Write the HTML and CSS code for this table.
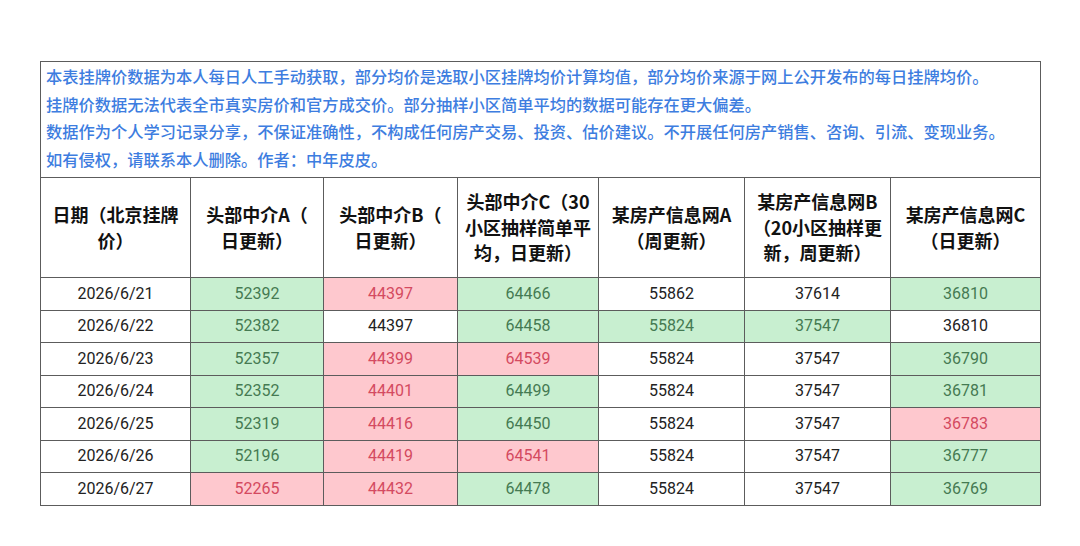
FILE: index.html
```html
<!DOCTYPE html>
<html lang="zh-CN">
<head>
<meta charset="utf-8">
<title>北京挂牌价</title>
<link rel="stylesheet" href="styles.css">
</head>
<body>
<div class="page">
<table class="sheet">
  <colgroup>
    <col class="c1"><col class="c2"><col class="c3"><col class="c4"><col class="c5"><col class="c6"><col class="c7">
  </colgroup>
  <tr class="note-row">
    <td colspan="7" class="note">本表挂牌价数据为本人每日人工手动获取，部分均价是选取小区挂牌均价计算均值，部分均价来源于网上公开发布的每日挂牌均价。<br>挂牌价数据无法代表全市真实房价和官方成交价。部分抽样小区简单平均的数据可能存在更大偏差。<br>数据作为个人学习记录分享，不保证准确性，不构成任何房产交易、投资、估价建议。不开展任何房产销售、咨询、引流、变现业务。<br>如有侵权，请联系本人删除。作者：中年皮皮。</td>
  </tr>
  <tr class="head">
    <th>日期（北京挂牌<br>价）</th>
    <th>头部中介A（<br>日更新）</th>
    <th>头部中介B（<br>日更新）</th>
    <th>头部中介C（30<br>小区抽样简单平<br>均，日更新）</th>
    <th>某房产信息网A<br>（周更新）</th>
    <th>某房产信息网B<br>（20小区抽样更<br>新，周更新）</th>
    <th>某房产信息网C<br>（日更新）</th>
  </tr>
  <tr><td>2026/6/21</td><td class="up">52392</td><td class="dn">44397</td><td class="up">64466</td><td>55862</td><td>37614</td><td class="up">36810</td></tr>
  <tr><td>2026/6/22</td><td class="up">52382</td><td>44397</td><td class="up">64458</td><td class="up">55824</td><td class="up">37547</td><td>36810</td></tr>
  <tr><td>2026/6/23</td><td class="up">52357</td><td class="dn">44399</td><td class="dn">64539</td><td>55824</td><td>37547</td><td class="up">36790</td></tr>
  <tr><td>2026/6/24</td><td class="up">52352</td><td class="dn">44401</td><td class="up">64499</td><td>55824</td><td>37547</td><td class="up">36781</td></tr>
  <tr><td>2026/6/25</td><td class="up">52319</td><td class="dn">44416</td><td class="up">64450</td><td>55824</td><td>37547</td><td class="dn">36783</td></tr>
  <tr><td>2026/6/26</td><td class="up">52196</td><td class="dn">44419</td><td class="dn">64541</td><td>55824</td><td>37547</td><td class="up">36777</td></tr>
  <tr><td>2026/6/27</td><td class="dn">52265</td><td class="dn">44432</td><td class="up">64478</td><td>55824</td><td>37547</td><td class="up">36769</td></tr>
</table>
</div>
</body>
</html>
```
FILE: styles.css
```css
html, body {
  margin: 0;
  padding: 0;
  background: #ffffff;
}
.page {
  padding: 61px 0 0 40px;
}
.sheet {
  border-collapse: collapse;
  table-layout: fixed;
  width: 1000px;
  font-family: "Roboto", "Noto Sans CJK SC", sans-serif;
  color: #222222;
}
.c1 { width: 150px; }
.c2 { width: 133px; }
.c3 { width: 134px; }
.c4 { width: 141px; }
.c5 { width: 146px; }
.c6 { width: 146px; }
.c7 { width: 150px; }
.sheet td, .sheet th {
  border: 1px solid #5c5c5c;
  padding: 0;
}
.note-row td.note {
  height: 114px;
  padding: 1px 0 0 5px;
  vertical-align: top;
  text-align: left;
  font-family: "Noto Sans CJK SC", sans-serif;
  font-size: 16.25px;
  font-weight: 500;
  line-height: 27.5px;
  color: #3d7de0;
  white-space: nowrap;
}
.head th {
  height: 99px;
  font-family: "Noto Sans CJK SC", sans-serif;
  font-size: 18px;
  font-weight: 700;
  line-height: 25.5px;
  text-align: center;
  vertical-align: middle;
  white-space: nowrap;
  color: #111111;
}
.sheet tr td {
  height: 31.5px;
  text-align: center;
  vertical-align: middle;
  font-size: 16px;
  line-height: 20px;
}
.sheet td.up {
  background: #c8efd0;
  color: #457a52;
}
.sheet td.dn {
  background: #fec8ce;
  color: #d44a60;
}
```
